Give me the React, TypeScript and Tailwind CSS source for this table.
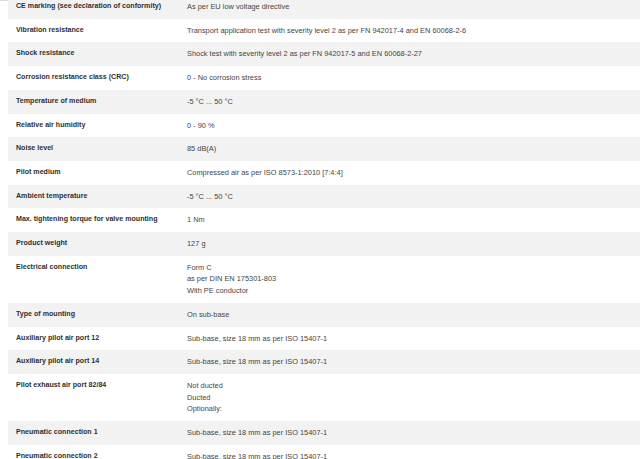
const specs: { label: string; value: string[] }[] = [
  { label: "CE marking (see declaration of conformity)", value: ["As per EU low voltage directive"] },
  { label: "Vibration resistance", value: ["Transport application test with severity level 2 as per FN 942017-4 and EN 60068-2-6"] },
  { label: "Shock resistance", value: ["Shock test with severity level 2 as per FN 942017-5 and EN 60068-2-27"] },
  { label: "Corrosion resistance class (CRC)", value: ["0 - No corrosion stress"] },
  { label: "Temperature of medium", value: ["-5 °C ... 50 °C"] },
  { label: "Relative air humidity", value: ["0 - 90 %"] },
  { label: "Noise level", value: ["85 dB(A)"] },
  { label: "Pilot medium", value: ["Compressed air as per ISO 8573-1:2010 [7:4:4]"] },
  { label: "Ambient temperature", value: ["-5 °C ... 50 °C"] },
  { label: "Max. tightening torque for valve mounting", value: ["1 Nm"] },
  { label: "Product weight", value: ["127 g"] },
  { label: "Electrical connection", value: ["Form C", "as per DIN EN 175301-803", "With PE conductor"] },
  { label: "Type of mounting", value: ["On sub-base"] },
  { label: "Auxiliary pilot air port 12", value: ["Sub-base, size 18 mm as per ISO 15407-1"] },
  { label: "Auxiliary pilot air port 14", value: ["Sub-base, size 18 mm as per ISO 15407-1"] },
  { label: "Pilot exhaust air port 82/84", value: ["Not ducted", "Ducted", "Optionally:"] },
  { label: "Pneumatic connection 1", value: ["Sub-base, size 18 mm as per ISO 15407-1"] },
  { label: "Pneumatic connection 2", value: ["Sub-base, size 18 mm as per ISO 15407-1"] },
];

export default function App() {
  return (
    <div
      className="h-[459px] w-[640px] overflow-hidden bg-white text-[7.4px] leading-[11.7px] text-[#333]"
      style={{ fontFamily: '"Liberation Sans", Arial, sans-serif' }}
    >
      <div className="h-px bg-[#dcdcdc]" />
      {/* spec table, first row cut at top */}
      <div className="-mt-[6px] pl-2">
        {specs.map((row, i) => (
          <div
            key={row.label}
            className={`flex py-[6px] ${i % 2 === 0 ? "bg-[#f2f2f3]" : "bg-white"}`}
          >
            <div className="w-[179px] shrink-0 whitespace-nowrap pl-2 text-[7.1px] font-bold text-[#2f2f2f]">
              {row.label}
            </div>
            <div className="flex-1 whitespace-nowrap text-[#444]">
              {row.value.map((v) => (
                <div key={v}>{v}</div>
              ))}
            </div>
          </div>
        ))}
      </div>
    </div>
  );
}
